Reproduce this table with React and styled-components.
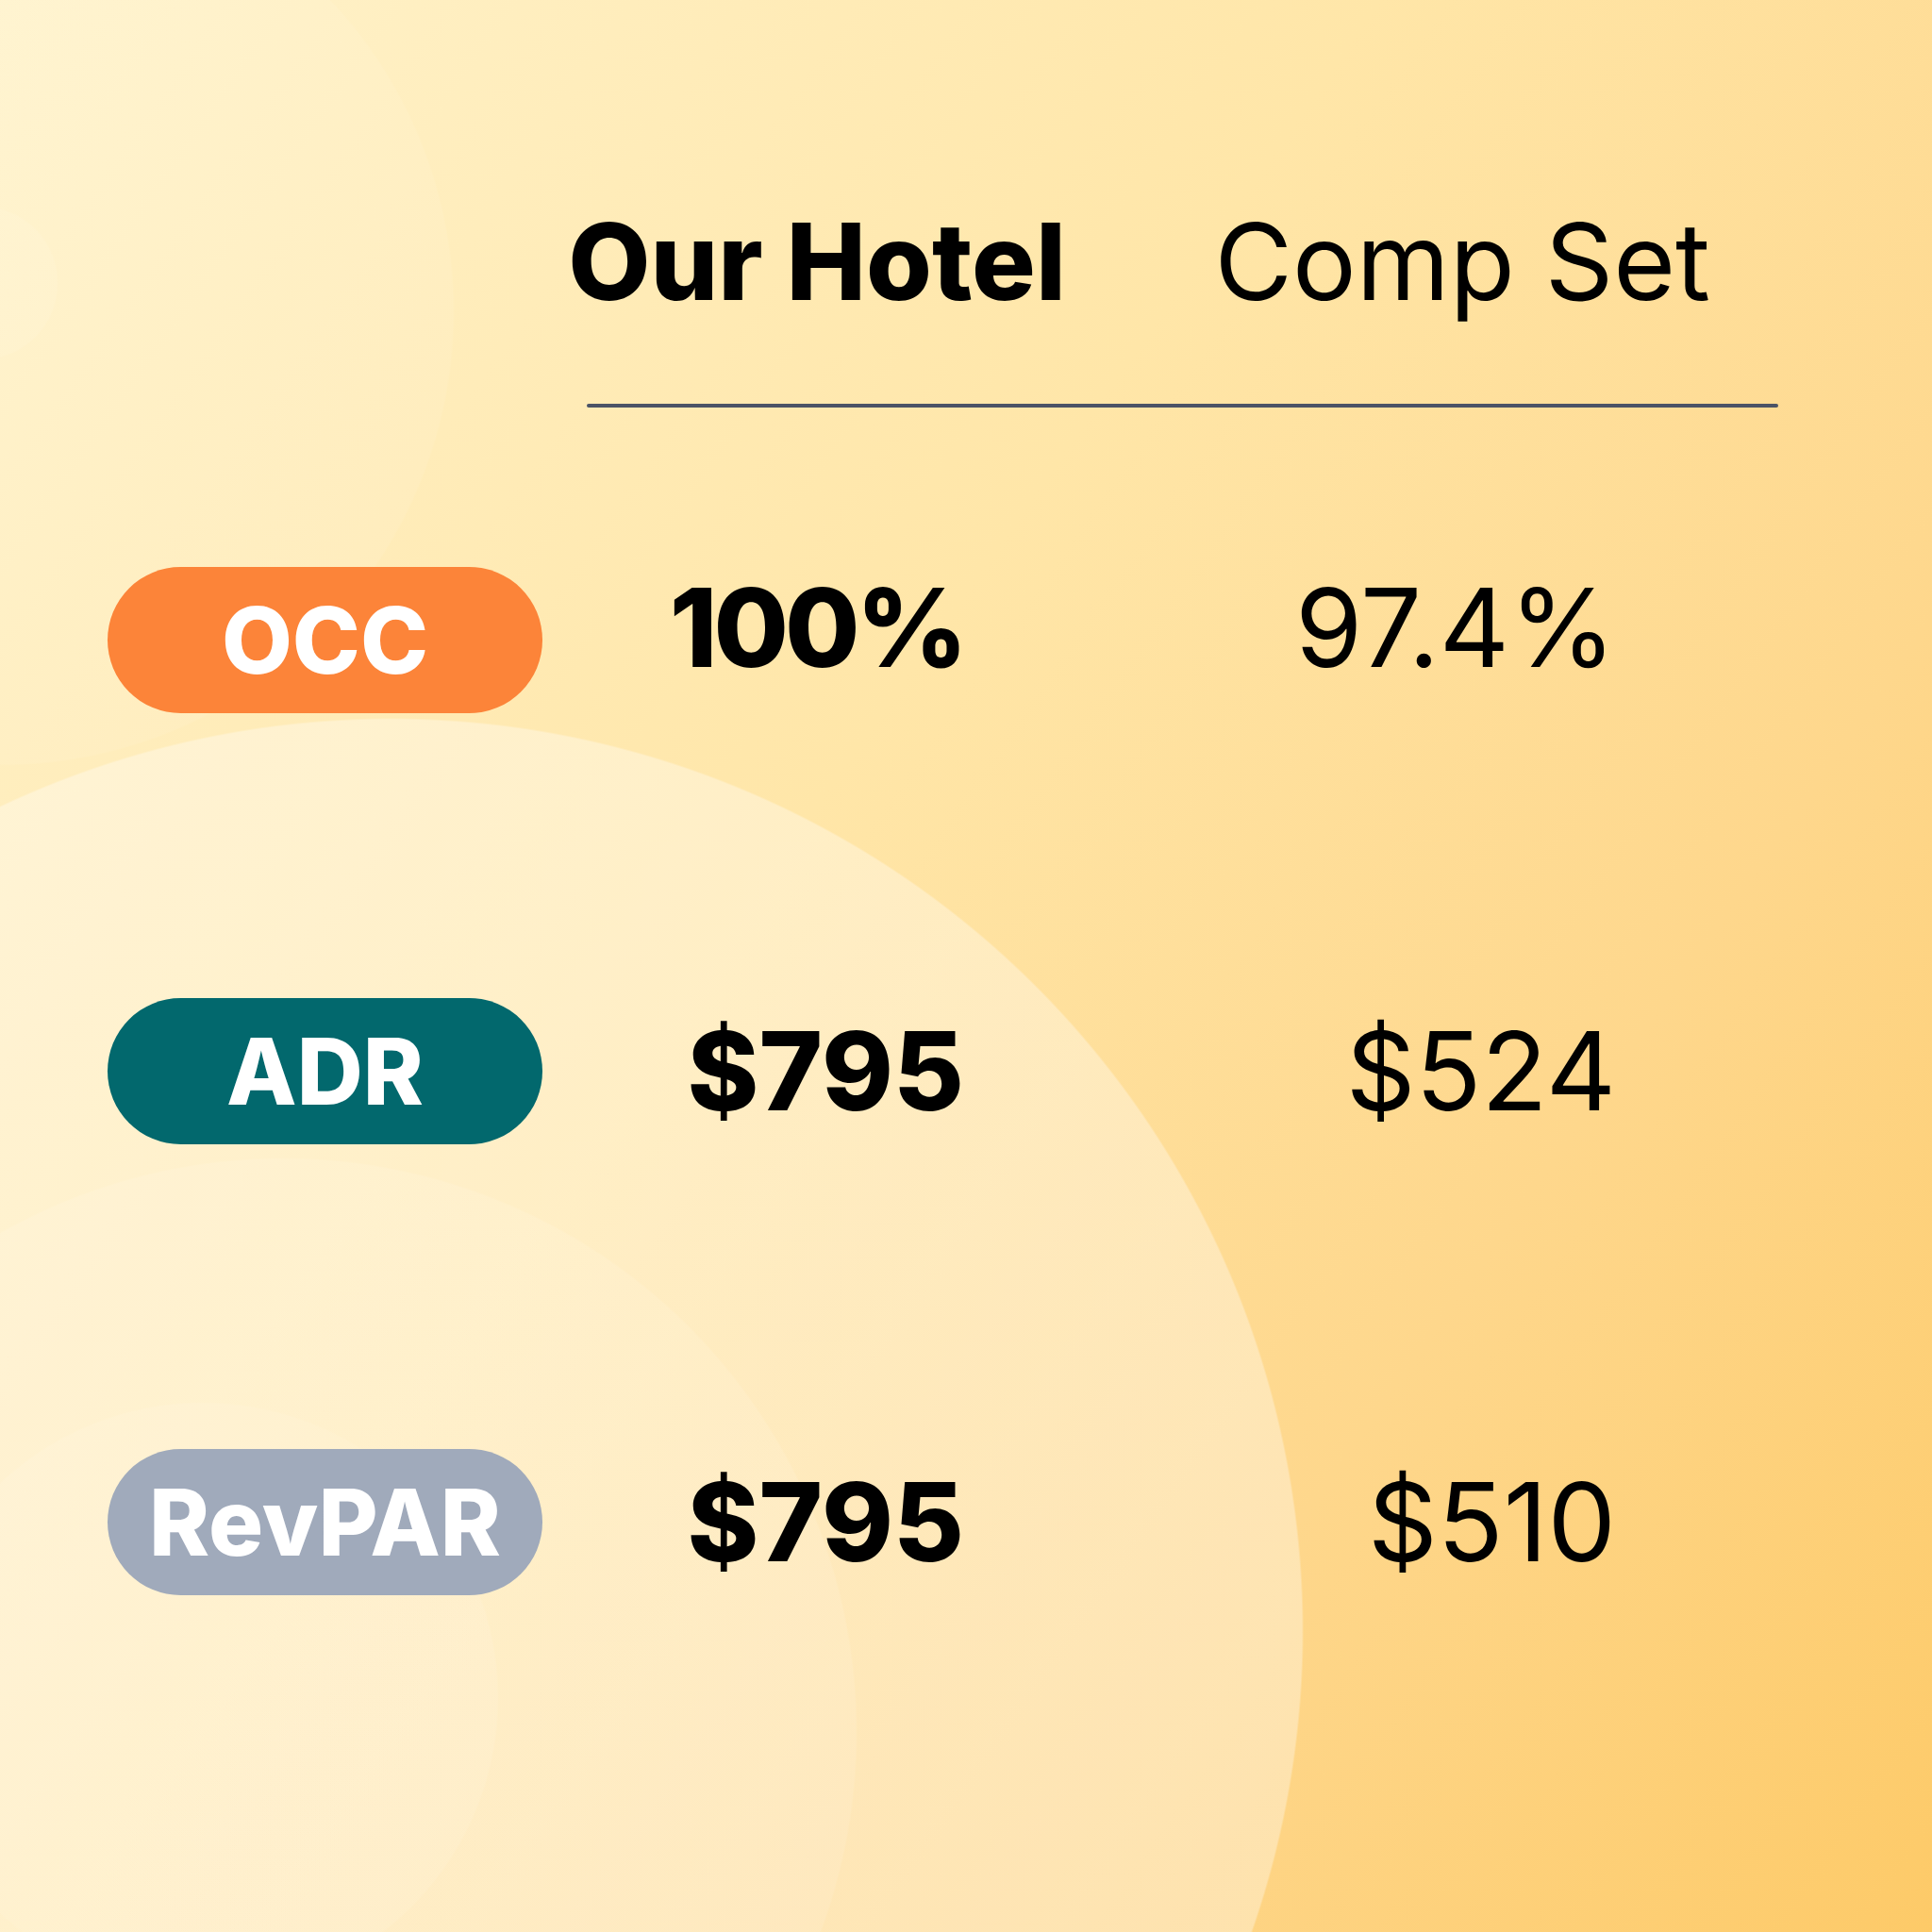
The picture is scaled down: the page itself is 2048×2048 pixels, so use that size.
import React from "react";
import styled, { createGlobalStyle } from "styled-components";

const Global = createGlobalStyle`
  html, body { margin: 0; padding: 0; }
  body { font-family: Inter, "Noto Sans", sans-serif; }
`;

const Page = styled.div`
  position: relative;
  width: 2048px;
  height: 2048px;
  overflow: hidden;
  box-sizing: border-box;
  padding: 221px 0 0 114px;
  color: #000;
  background-image:
    radial-gradient(circle at 300px 1836px, rgba(255,255,255,0.10) 0, rgba(255,255,255,0.10) 607px, rgba(255,255,255,0) 609px),
    radial-gradient(circle at 215px 1800px, rgba(255,255,255,0.08) 0, rgba(255,255,255,0.08) 312px, rgba(255,255,255,0) 314px),
    radial-gradient(circle at 414px 1729px, rgba(255,255,255,0.34) 0, rgba(255,255,255,0.34) 966px, rgba(255,255,255,0) 968px),
    radial-gradient(circle at 0px 330px, rgba(255,255,255,0.07) 0, rgba(255,255,255,0.07) 480px, rgba(255,255,255,0) 482px),
    radial-gradient(circle at -20px 300px, rgba(255,255,255,0.08) 0, rgba(255,255,255,0.08) 80px, rgba(255,255,255,0) 82px),
    linear-gradient(125deg, #fff3cd 0%, #ffe6a8 42%, #fed78c 72%, #fdca68 100%);
`;

const Table = styled.div`
  display: flex;
  flex-direction: column;
`;

const Row = styled.div`
  display: grid;
  grid-template-columns: 508px 498px 765px;
  align-items: center;
  margin-top: ${(p) => p.$gap || 0}px;
  height: ${(p) => p.$h}px;
`;

const HeadCell = styled.div`
  display: flex;
  justify-content: ${(p) => (p.$end ? "flex-end" : "center")};
  font-size: 113px;
  line-height: 1;
  font-weight: ${(p) => (p.$bold ? 800 : 400)};
  white-space: nowrap;
  padding-right: ${(p) => p.$pr || 0}px;
  margin-left: ${(p) => p.$ml || 0}px;
`;

const Divider = styled.div`
  grid-column: 2 / 4;
  height: 4px;
  border-radius: 2px;
  background: #4b5366;
`;

const Pill = styled.div`
  width: 461px;
  height: 155px;
  border-radius: 78px;
  background: ${(p) => p.$bg};
  color: #fff;
  display: flex;
  align-items: center;
  justify-content: center;
  font-size: 97px;
  line-height: 1;
  font-weight: 800;
  white-space: nowrap;
`;

const Value = styled.div`
  font-size: 115px;
  line-height: 1;
  font-weight: ${(p) => (p.$bold ? 800 : 400)};
  text-align: right;
  white-space: nowrap;
  padding-right: ${(p) => p.$pr}px;
  margin-bottom: ${(p) => (p.$lift || 0) * 2}px;
  letter-spacing: ${(p) => p.$ls || 0}px;
`;

const rows = [
  { label: "OCC", bg: "#fc8439", ours: "100%", comp: "97.4%", gap: 169, lift: 13, ls: -4 },
  { label: "ADR", bg: "#02686d", ours: "$795", comp: "$524", gap: 302, lift: 0, ls: 0 },
  { label: "RevPAR", bg: "#a0aabb", ours: "$795", comp: "$510", gap: 323, lift: 0, ls: 0 },
];

export default function App() {
  return (
    <>
      <Global />
      <Page>
        <Table>
          <Row $h={112}>
            <span />
            <HeadCell $bold $ml={-10}>Our Hotel</HeadCell>
            <HeadCell $end $pr={72}>Comp Set</HeadCell>
          </Row>
          <Row $h={4} $gap={95}>
            <Divider />
          </Row>
          {rows.map((r) => (
            <Row key={r.label} $h={155} $gap={r.gap}>
              <Pill $bg={r.bg}>{r.label}</Pill>
              <Value $bold $pr={98} $lift={r.lift} $ls={r.ls}>{r.ours}</Value>
              <Value $pr={172} $lift={r.lift}>{r.comp}</Value>
            </Row>
          ))}
        </Table>
      </Page>
    </>
  );
}
